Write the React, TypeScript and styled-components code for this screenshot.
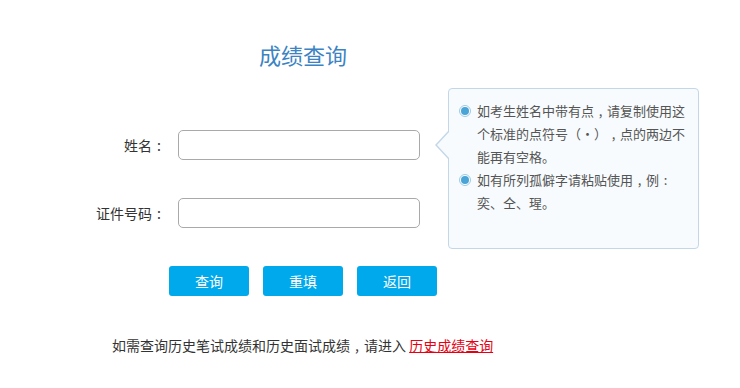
import { Fragment } from 'react';
import styled, { createGlobalStyle } from 'styled-components';

const GlobalStyle = createGlobalStyle`
	html, body {
		margin: 0;
		padding: 0;
		background: #fff;
	}
	body {
		font-family: "Microsoft YaHei", "Noto Sans CJK SC", "Noto Sans", sans-serif;
		color: #333;
	}
`;

const StyledPage = styled.div`
	width: 740px;
	height: 388px;
	padding-top: 39px;
	box-sizing: border-box;
`;

const StyledTitle = styled.h1`
	width: 606px;
	margin: 0;
	text-align: center;
	font-size: 22px;
	font-weight: normal;
	line-height: 30px;
	color: #3b83c3;
`;

const StyledMain = styled.div`
	display: flex;
	align-items: flex-start;
	margin-top: 19px;
`;

const StyledForm = styled.div`
	display: flex;
	flex-direction: column;
	gap: 38px;
	padding-top: 42px;
`;

const StyledRow = styled.label`
	display: grid;
	grid-template-columns: 166px 242px;
	column-gap: 12px;
	align-items: center;
`;

const StyledLabel = styled.span`
	text-align: right;
	font-size: 14px;
	color: #333;
`;

/* full-width punctuation drawn centred in its cell, as in the original font */
const StyledPunct = styled.span`
	display: inline-block;
	width: 1em;
	text-align: center;
`;

const StyledInput = styled.input`
	box-sizing: border-box;
	width: 242px;
	height: 30px;
	border: 1px solid #a9a9a9;
	border-radius: 5px;
	outline: none;
	padding: 0 8px;
	font-size: 14px;
`;

const StyledTip = styled.div`
	position: relative;
	box-sizing: border-box;
	width: 251px;
	height: 161px;
	margin-left: 28px;
	padding: 10px 10px 0 10px;
	background: #f7fbfd;
	border: 1px solid #c3d7e8;
	border-radius: 4px;

	/* arrow pointing at the name field */
	&::before,
	&::after {
		content: '';
		position: absolute;
		width: 0;
		height: 0;
		border-style: solid;
	}
	&::before {
		top: 41px;
		left: -14px;
		border-width: 15px 14px 15px 0;
		border-color: transparent #c3d7e8 transparent transparent;
	}
	&::after {
		left: -12px;
		top: 42px;
		border-width: 14px 13px 14px 0;
		border-color: transparent #f7fbfd transparent transparent;
	}
`;

const StyledTipItem = styled.div`
	display: flex;
	align-items: flex-start;
	font-size: 13px;
	line-height: 23px;
	color: #555;
`;

const StyledDot = styled.span`
	flex: none;
	box-sizing: border-box;
	width: 12px;
	height: 12px;
	margin: 6px 6px 0 0;
	border: 1px solid #9ccbe6;
	border-radius: 50%;
	background: #fff;
	display: flex;
	align-items: center;
	justify-content: center;

	&::after {
		content: '';
		width: 8px;
		height: 8px;
		border-radius: 50%;
		background: #4aa4d6;
	}
`;

const StyledButtons = styled.div`
	display: flex;
	gap: 14px;
	margin: 17px 0 0 169px;
`;

const StyledButton = styled.button`
	width: 80px;
	height: 30px;
	border: none;
	border-radius: 3px;
	background: #00a8ec;
	color: #fff;
	font-family: inherit;
	font-size: 14px;
	cursor: pointer;
	padding: 0;
`;

const StyledFooter = styled.p`
	margin: 39px 0 0 112px;
	font-size: 14px;
	line-height: 20px;
	color: #333;
`;

const StyledLink = styled.a`
	color: #e60012;
	text-decoration: underline;
`;

const punctMap: Record<string, string> = { '，': ',', '：': ':' };

// centre commas and colons the way the original page's font does
const Text = ({ children }: { children: string }) => (
	<>
		{children.split(/([，：])/).map((part, i) =>
			punctMap[part] ? (
				<StyledPunct key={i}>{punctMap[part]}</StyledPunct>
			) : (
				<Fragment key={i}>{part}</Fragment>
			)
		)}
	</>
);

const tips = [
	'如考生姓名中带有点，请复制使用这个标准的点符号（·），点的两边不能再有空格。',
	'如有所列孤僻字请粘贴使用，例：奕、仝、瑆。',
];

const fields = ['姓名：', '证件号码：'];

const App = () => {
	return (
		<StyledPage>
			<GlobalStyle />
			<StyledTitle>成绩查询</StyledTitle>
			<StyledMain>
				<StyledForm>
					{fields.map((field) => (
						<StyledRow key={field}>
							<StyledLabel>
								<Text>{field}</Text>
							</StyledLabel>
							<StyledInput type="text" />
						</StyledRow>
					))}
				</StyledForm>
				<StyledTip>
					{tips.map((tip) => (
						<StyledTipItem key={tip}>
							<StyledDot />
							<span>
								<Text>{tip}</Text>
							</span>
						</StyledTipItem>
					))}
				</StyledTip>
			</StyledMain>
			<StyledButtons>
				<StyledButton>查询</StyledButton>
				<StyledButton>重填</StyledButton>
				<StyledButton>返回</StyledButton>
			</StyledButtons>
			<StyledFooter>
				<Text>如需查询历史笔试成绩和历史面试成绩，请进入</Text>{' '}
				<StyledLink href="#">历史成绩查询</StyledLink>
			</StyledFooter>
		</StyledPage>
	);
};

export default App;
